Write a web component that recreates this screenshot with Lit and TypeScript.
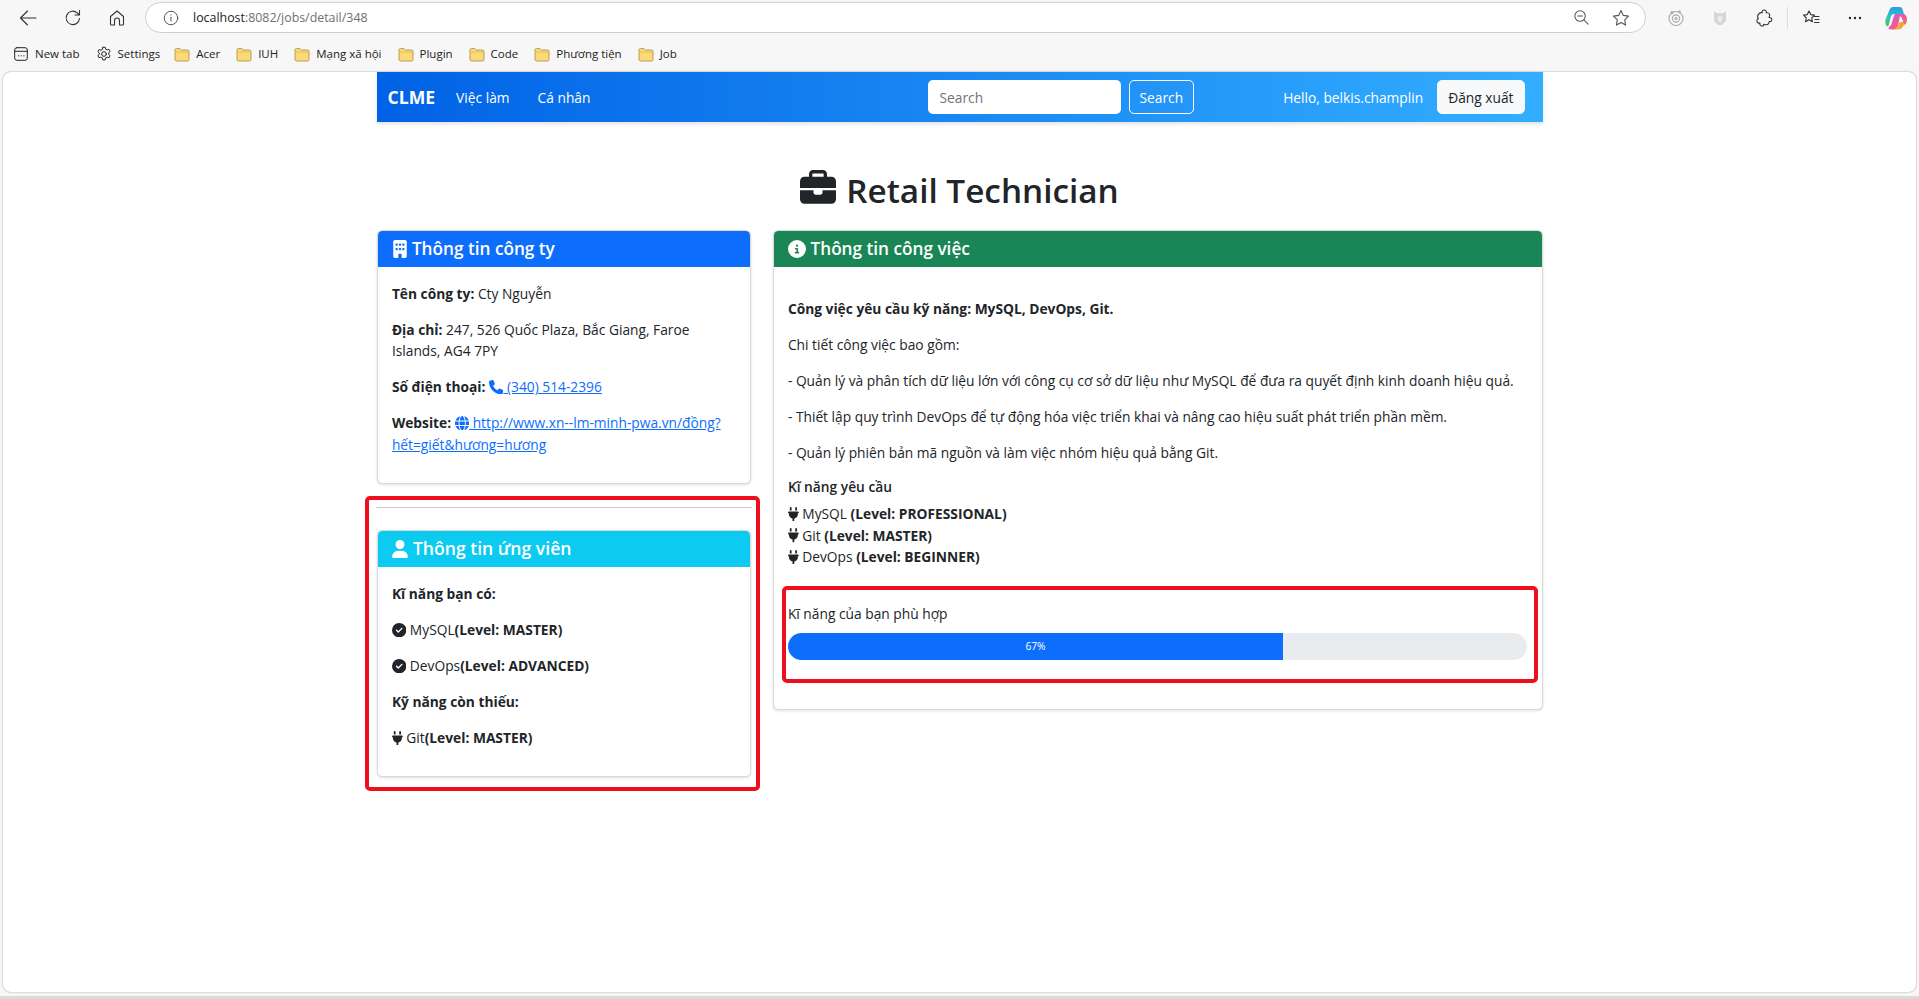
import { LitElement, html, css, svg } from "lit";
import { customElement } from "lit/decorators.js";

const fa = (vb: string, d: string, cls = "") =>
  html`<svg class="fa ${cls}" viewBox="${vb}" fill="currentColor"><path d="${d}"></path></svg>`;

const I = {
  check: () => fa("0 0 512 512", "M256 512A256 256 0 1 0 256 0a256 256 0 1 0 0 512zM369 209L241 337c-9.4 9.4-24.6 9.4-33.9 0l-64-64c-9.4-9.4-9.4-24.6 0-33.9s24.6-9.4 33.9 0l47 47L335 175c9.4-9.4 24.6-9.4 33.9 0s9.4 24.6 0 33.9z"),
  info: () => fa("0 0 512 512", "M256 512A256 256 0 1 0 256 0a256 256 0 1 0 0 512zM216 336h24V272H216c-13.3 0-24-10.7-24-24s10.7-24 24-24h48c13.3 0 24 10.7 24 24v88h8c13.3 0 24 10.7 24 24s-10.7 24-24 24H216c-13.3 0-24-10.7-24-24s10.7-24 24-24zm40-208a32 32 0 1 1 0 64 32 32 0 1 1 0-64z"),
  user: () => fa("0 0 448 512", "M224 256A128 128 0 1 0 224 0a128 128 0 1 0 0 256zm-45.7 48C79.8 304 0 383.8 0 482.3C0 498.7 13.3 512 29.7 512H418.3c16.4 0 29.7-13.3 29.7-29.7C448 383.8 368.2 304 269.7 304H178.3z"),
  phone: () => fa("0 0 512 512", "M164.9 24.6c-7.7-18.6-28-28.5-47.4-23.2l-88 24C12.1 30.2 0 46 0 64C0 311.4 200.6 512 448 512c18 0 33.8-12.1 38.6-29.5l24-88c5.3-19.4-4.6-39.7-23.2-47.4l-96-40c-16.3-6.8-35.2-2.1-46.3 11.6L304.7 368C234.3 334.7 177.3 277.7 144 207.3L193.3 167c13.7-11.2 18.4-30 11.6-46.3l-40-96z"),
  building: () => fa("0 0 384 512", "M48 0C21.5 0 0 21.5 0 48V464c0 26.5 21.5 48 48 48h96V432c0-26.5 21.5-48 48-48s48 21.5 48 48v80h96c26.5 0 48-21.5 48-48V48c0-26.5-21.5-48-48-48H48zM64 240c0-8.8 7.2-16 16-16h32c8.8 0 16 7.2 16 16v32c0 8.8-7.2 16-16 16H80c-8.8 0-16-7.2-16-16V240zm112-16h32c8.8 0 16 7.2 16 16v32c0 8.8-7.2 16-16 16H176c-8.8 0-16-7.2-16-16V240c0-8.8 7.2-16 16-16zm80 16c0-8.8 7.2-16 16-16h32c8.8 0 16 7.2 16 16v32c0 8.8-7.2 16-16 16H272c-8.8 0-16-7.2-16-16V240zM80 96h32c8.8 0 16 7.2 16 16v32c0 8.8-7.2 16-16 16H80c-8.8 0-16-7.2-16-16V112c0-8.8 7.2-16 16-16zm80 16c0-8.8 7.2-16 16-16h32c8.8 0 16 7.2 16 16v32c0 8.8-7.2 16-16 16H176c-8.8 0-16-7.2-16-16V112zM272 96h32c8.8 0 16 7.2 16 16v32c0 8.8-7.2 16-16 16H272c-8.8 0-16-7.2-16-16V112c0-8.8 7.2-16 16-16z"),
  plug: () => fa("0 0 384 512", "M96 0C78.3 0 64 14.3 64 32v96h64V32c0-17.7-14.3-32-32-32zM288 0c-17.7 0-32 14.3-32 32v96h64V32c0-17.7-14.3-32-32-32zM32 160c-17.7 0-32 14.3-32 32s14.3 32 32 32v32c0 77.4 55 142 128 156.8V480c0 17.7 14.3 32 32 32s32-14.3 32-32V412.8C297 398 352 333.4 352 256V224c17.7 0 32-14.3 32-32s-14.3-32-32-32H32z", "plug"),
  briefcase: () => fa("0 0 512 512", "M184 48H328c4.4 0 8 3.6 8 8V96H176V56c0-4.4 3.6-8 8-8zm-56 8V96H64C28.7 96 0 124.7 0 160v96H192 320 512V160c0-35.3-28.7-64-64-64H384V56c0-30.9-25.1-56-56-56H184c-30.9 0-56 25.1-56 56zM512 288H320v32c0 17.7-14.3 32-32 32H224c-17.7 0-32-14.3-32-32V288H0V416c0 35.3 28.7 64 64 64H448c35.3 0 64-28.7 64-64V288z"),
  globe: () => fa("0 0 512 512", "M352 256c0 22.2-1.2 43.6-3.3 64H163.3c-2.2-20.4-3.3-41.8-3.3-64s1.2-43.6 3.3-64H348.7c2.2 20.4 3.3 41.8 3.3 64zm28.8-64H503.9c5.3 20.5 8.1 41.9 8.1 64s-2.8 43.5-8.1 64H380.8c2.1-20.6 3.2-42 3.2-64s-1.1-43.4-3.2-64zm112.6-32H376.7c-10-63.9-29.8-117.4-55.3-151.6c78.3 20.7 142 77.5 171.9 151.6zm-149.1 0H167.7c6.1-36.4 15.5-68.6 27-94.7c10.5-23.6 22.2-40.7 33.5-51.5C239.4 3.2 248.7 0 256 0s16.6 3.2 27.8 13.8c11.3 10.8 23 27.9 33.5 51.5c11.6 26 20.9 58.2 27 94.7zm-209 0H18.6C48.6 85.9 112.2 29.1 190.6 8.4C165.1 42.6 145.3 96.1 135.3 160zM8.1 192H131.2c-2.1 20.6-3.2 42-3.2 64s1.1 43.4 3.2 64H8.1C2.8 299.5 0 278.1 0 256s2.8-43.5 8.1-64zM194.7 446.6c-11.6-26-20.9-58.2-27-94.6H344.3c-6.1 36.4-15.5 68.6-27 94.6c-10.5 23.6-22.2 40.7-33.5 51.5C272.6 508.8 263.3 512 256 512s-16.6-3.2-27.8-13.8c-11.3-10.8-23-27.9-33.5-51.5zM135.3 352c10 63.9 29.8 117.4 55.3 151.6C112.2 482.9 48.6 426.1 18.6 352H135.3zm358.1 0c-30 74.1-93.6 130.9-171.9 151.6c25.5-34.2 45.2-87.7 55.3-151.6H493.4z"),
};

const line = (w: number, body: unknown, cls = "") =>
  html`<svg class="ln ${cls}" width="${w}" height="${w}" viewBox="0 0 20 20" fill="none" stroke="currentColor" stroke-width="1.1" stroke-linecap="round" stroke-linejoin="round">${body}</svg>`;

const chrome = {
  back: svg`<path d="M18 10H2.500M9.500 3l-7 7 7 7"/>`,
  reload: svg`<path d="M16.500 10.500a6.700 6.700 0 1 1-2.300-5.700L16.500 7M16.500 2.500V7H12"/>`,
  home: svg`<path d="M3.500 8.500 10 3l6.500 5.500V16a1 1 0 0 1-1 1H12.500v-4.500a2.500 2.500 0 0 0-5 0V17H4.500a1 1 0 0 1-1-1z"/>`,
  info: svg`<circle cx="10" cy="10" r="7.500"/><path d="M10 9v4.500M10 6.400v.4"/>`,
  zoom: svg`<circle cx="8.500" cy="8.500" r="5.500"/><path d="M6 8.500h5M12.600 12.600 17 17"/>`,
  star: svg`<path d="M10 2.500l2.300 4.900 5.200.7-3.800 3.700.9 5.300-4.600-2.600-4.600 2.600.9-5.300-3.800-3.700 5.200-.7z"/>`,
  puzzle: svg`<path d="M8.200 4.800C7.700 2.900 8.800 2 10.200 2s2.500 1 2 2.800c1.800-.3 3.500.4 3.500 2.200 0 1.100-.5 1.800-.6 2.500 1.500-.2 2.700.7 2.700 2.100 0 1.500-1.200 2.300-2.700 2 .2 1.900-1.100 3.100-3 3.100-1 0-1.700-.4-2.400-.5.100 1.500-.8 1.900-2 1.700-1.500-.2-2.100-1.500-1.800-2.800-1.500.2-3-.6-3-2.200 0-1.300.7-2 1.500-2.400-1.100-1.100-1.100-2.900 0-4C5.400 4.500 6.900 4.500 8.200 4.800z"/>`,
  fav: svg`<path d="M8 3l1.700 3.600 3.800.5-2.800 2.700.7 3.900L8 11.800l-3.400 1.900.7-3.900L2.500 7.100l3.800-.5zM13.500 8.500H18M14 11.500h4M13.500 14.500H18"/>`,
  tab: svg`<rect x="3" y="3" width="14" height="14" rx="2.500"/><path d="M3 7h14M7 12h.4M10 12h.4M13 12h.4"/>`,
  gear: svg`<circle cx="10" cy="10" r="2.600"/><path d="M8.600 2.500h2.800l.4 2.100 1.600.9 2-.7 1.400 2.400-1.600 1.400v1.800l1.600 1.400-1.400 2.400-2-.7-1.600.9-.4 2.100H8.600l-.4-2.100-1.600-.9-2 .7-1.400-2.400 1.600-1.400V8.900L3.200 7.500l1.400-2.400 2 .7 1.600-.9z"/>`,
  eye: svg`<circle cx="10" cy="10.500" r="7"/><circle cx="10" cy="10.500" r="3.600"/><circle cx="10" cy="10.500" r="1"/><circle cx="6" cy="4.500" r="1" fill="currentColor"/><circle cx="13.500" cy="3.800" r=".8" fill="currentColor"/>`,
  shield: svg`<path d="M4 3l3 2.200h6L16 3v8.500c0 2.800-2.800 4.800-6 6-3.200-1.200-6-3.200-6-6z" fill="currentColor" fill-opacity=".45" stroke="none"/><path d="M7.500 8h5v4.500L10 14.500 7.500 12.500z" fill="#e9e9e9" stroke="none"/>`,
};

const folder = html`<svg class="folder" width="16" height="15" viewBox="0 0 16 15"><path d="M1 3a1.500 1.500 0 0 1 1.500-1.500h3.200L7.400 3h6.100A1.500 1.500 0 0 1 15 4.500v8a1.500 1.500 0 0 1-1.500 1.500h-11A1.500 1.500 0 0 1 1 12.500z" fill="#fbd978" stroke="#a98b3c" stroke-width=".8"></path><path d="M1.200 5h13.600" stroke="#e0b94f" stroke-width=".8"></path></svg>`;

const bookmarks = ["Acer", "IUH", "Mạng xã hội", "Plugin", "Code", "Phương tiện", "Job"];

@customElement("app-root")
export class AppRoot extends LitElement {
  static styles = css`
    :host {
      display: block;
      position: relative;
      height: 999px;
      overflow: hidden;
      background: #f7f7f7;
      font-family: "Open Sans", "Noto Sans", sans-serif;
      color: #212529;
      font-size: 13.78px;
      line-height: 21.6px;
    }
    .toolbar {
      height: 36px;
      display: flex;
      align-items: center;
      padding-left: 18px;
      color: #333;
    }
    .toolbar > * { flex: none; }
    .nav-ic { display: flex; gap: 24.5px; margin-right: 18px; }
    .address {
      width: 1501px;
      height: 31px;
      box-sizing: border-box;
      margin-top: -1px;
      background: #fff;
      border: 1px solid #cfcfcf;
      border-radius: 16px;
      display: flex;
      align-items: center;
      padding: 0 14px 0 16px;
      font-size: 12.4px;
    }
    .address .url { margin-left: 13px; flex: 1; color: #6f6f6f; }
    .address .url b { font-weight: 400; color: #1c1c1c; }
    .address .ln { color: #555; }
    .address .zoom { margin-right: 20px; }
    .tools { display: flex; align-items: center; margin-left: 20px; gap: 24px; }
    .tools .faint { color: #aaa; }
    .sep { width: 1px; height: 22px; background: #ddd; margin: 0 -11px; }
    .copilot { margin-left: -4px; }
    .bmbar {
      height: 36px;
      display: flex;
      align-items: center;
      padding-left: 12px;
      font-size: 11.5px;
      color: #222;
    }
    .bm { display: flex; align-items: center; gap: 6px; margin-right: 16px; white-space: nowrap; }
    .bm.tab { gap: 5px; margin-right: 15px; }
    .bm.set { gap: 5px; margin-right: 14px; }
    .page {
      margin: 0 3px;
      height: 920px;
      background: #fff;
      border-radius: 8px;
      box-shadow: 0 0 2px rgba(0, 0, 0, 0.4);
    }
    .status { height: 3px; margin-top: 4px; background: #dadada; }
    .container { width: 1166px; margin: 0 auto; position: relative; }
    nav {
      height: 50px;
      display: flex;
      align-items: center;
      padding: 0 18px 0 11px;
      background: linear-gradient(90deg, #0062e6, #33aeff);
      color: #fff;
      box-shadow: 0 2px 4px rgba(0, 0, 0, 0.12);
    }
    nav > span { padding-top: 1px; }
    .brand { font-size: 17.6px; font-weight: 700; margin-right: 21px; }
    .link { margin-right: 28px; }
    .spacer { flex: 1; }
    nav > .search {
      width: 193px;
      height: 34px;
      box-sizing: border-box;
      background: #fff;
      border-radius: 5px;
      color: #6c757d;
      padding: 7px 12px 5px;
      margin-right: 8px;
    }
    nav > .btn {
      height: 34px;
      box-sizing: border-box;
      border-radius: 5px;
      border: 1px solid #fff;
      padding: 6px 10px 4px;
      display: block;
    }
    .hello { margin: 0 14px 0 89px; }
    nav > .logout { background: #f8f9fa; border-color: #f8f9fa; color: #212529; padding: 6px 10px 4px; }
    h1 {
      margin: 0;
      height: 108px;
      padding-top: 46px;
      padding-bottom: 18px;
      box-sizing: border-box;
      font-size: 33.3px;
      line-height: 43px;
      font-weight: 600;
      display: flex;
      justify-content: center;
      align-items: center;
      gap: 10px;
    }
    h1 .fa { width: 36px; height: 36px; margin-top: -4px; }
    .cols { display: grid; grid-template-columns: 374px 770px; column-gap: 22px; align-items: start; }
    .card {
      background: #fff;
      border: 1px solid rgba(0, 0, 0, 0.15);
      border-radius: 5.4px;
      box-shadow: 0 1px 3px rgba(0, 0, 0, 0.12);
      overflow: hidden;
    }
    .head {
      height: 37px;
      display: flex;
      align-items: center;
      padding: 0 14.4px;
      margin: -1px -1px 0;
      color: #fff;
      font-size: 17.2px;
      font-weight: 600;
      gap: 4px;
    }
    .head .fa { width: 18px; height: 18px; }
    .blue { background: #0d6efd; }
    .blue.head { gap: 3px; }
    .green { background: #1b8655; }
    .green.head { gap: 5px; padding-left: 15px; }
    .cyan { background: #0dcaf0; font-size: 17.6px; }
    .body { padding: 15.8px 14.4px 8px; }
    .card-2 .body { padding-top: 16.4px; }
    p { margin: 0 0 14.4px; }
    strong { font-weight: 700; }
    a { color: #0d6efd; text-decoration: underline; }
    .fa { width: 14.4px; height: 14.4px; vertical-align: -2px; }
    .fa.plug { width: 10.8px; }
    .card-1 { height: 254px; box-sizing: border-box; }
    hr { margin: 23px -1px 22px; border: 0; border-top: 1px solid #ccc; height: 0; }
    .card-2 { height: 247px; box-sizing: border-box; }
    .card-3 { height: 480px; box-sizing: border-box; }
    .body3 { padding: 31.2px 14.4px 0; }
    .h6 { font-weight: 600; margin: -2.4px 0 6px; }
    .req { margin-bottom: 35.4px; }
    .req div { height: 21.4px; }
    .match { margin-bottom: 8.6px; }
    .progress {
      height: 27px;
      width: 739px;
      border-radius: 13.5px;
      background: #e9ecef;
      overflow: hidden;
      display: flex;
    }
    .fill {
      background: #0d6efd;
      color: #fff;
      font-size: 10.2px;
      line-height: 27px;
      text-align: center;
    }
    .mark {
      position: absolute;
      box-sizing: border-box;
      border: 4px solid #ee0f1d;
      border-radius: 5px;
      pointer-events: none;
    }
    .mark-left { left: -12px; top: 424px; width: 395px; height: 295px; }
    .mark-right { left: 405px; top: 514px; width: 756px; height: 97px; }
  `;

  render() {
    return html`
      <div class="toolbar">
        <div class="nav-ic">
          ${line(20, chrome.back)}${line(20, chrome.reload)}${line(20, chrome.home)}
        </div>
        <div class="address">
          ${line(18, chrome.info)}
          <span class="url"><b>localhost</b>:8082/jobs/detail/348</span>
          ${line(19, chrome.zoom, "zoom")}${line(20, chrome.star)}
        </div>
        <div class="tools">
          ${line(20, chrome.eye, "faint")}${line(20, chrome.shield, "faint")}${line(20, chrome.puzzle)}
          <span class="sep"></span>
          ${line(20, chrome.fav)}
          <svg width="20" height="20" viewBox="0 0 20 20" fill="#222"><circle cx="5" cy="10" r="1.200"></circle><circle cx="10" cy="10" r="1.200"></circle><circle cx="15" cy="10" r="1.200"></circle></svg>
          <svg class="copilot" width="22" height="24" viewBox="0 0 22 24">
            <defs>
              <linearGradient id="cg1" x1="0" y1="0" x2="0" y2="1"><stop offset="0" stop-color="#2b9be8"></stop><stop offset=".55" stop-color="#2fc6c0"></stop><stop offset="1" stop-color="#5fc24a"></stop></linearGradient>
              <linearGradient id="cg2" x1="0" y1="0" x2="1" y2="1"><stop offset="0" stop-color="#b868e6"></stop><stop offset=".6" stop-color="#ee5a9a"></stop><stop offset="1" stop-color="#f47a3a"></stop></linearGradient>
              <linearGradient id="cg3" x1="0" y1="0" x2="1" y2="0"><stop offset="0" stop-color="#e9d04a"></stop><stop offset="1" stop-color="#f4923a"></stop></linearGradient>
            </defs>
            <path d="M8 1h6.500c1.500 0 2.600.9 3 2.200L19 8H9.500c-2 0-3.200 1-3.700 2.800L4 18.500c-.4 1.500-1.500 2.500-2.500 1.500C.5 18.500 0 16 .5 13.500L4.500 4C5.200 2 6.300 1 8 1z" fill="url(#cg1)"></path>
            <path d="M10 8h8.500c1.500 0 2.800 1.500 3.300 3.500.5 2.500 0 4.500-1 6.500-.5 1-1.500 1-2 0l-1.500-5c-.5-2-1.800-3-3.800-3H9z" fill="url(#cg2)"></path>
            <path d="M10.500 9.500h3c1 0 1.500.5 1.300 1.500L13 20c-.5 2.200-1.800 3.500-4 3.500H5.500C3.500 23.500 3 22 4 21c1.500-1 2.200-2 2.700-3.500L8.500 11c.3-1 1-1.500 2-1.500z" fill="url(#cg2)"></path>
            <path d="M15 16h3.500c.8 1.500.3 4-1.500 5.800-1 1-2.200 1.700-3.700 1.700H8c2.500-.5 4-1.800 4.800-3.800z" fill="url(#cg3)"></path>
          </svg>
        </div>
      </div>
      <div class="bmbar">
        <span class="bm tab">${line(18, chrome.tab)}New tab</span>
        <span class="bm set">${line(18, chrome.gear)}Settings</span>
        ${bookmarks.map((b) => html`<span class="bm">${folder}${b}</span>`)}
      </div>
      <div class="page">
        <div class="container">
          <nav>
            <span class="brand">CLME</span>
            <span class="link">Việc làm</span>
            <span class="link">Cá nhân</span>
            <span class="spacer"></span>
            <span class="search">Search</span>
            <span class="btn">Search</span>
            <span class="hello">Hello, belkis.champlin</span>
            <span class="btn logout">Đăng xuất</span>
          </nav>
          <h1>${I.briefcase()}Retail Technician</h1>
          <div class="cols">
            <div>
              <section class="card card-1">
                <div class="head blue">${I.building()}Thông tin công ty</div>
                <div class="body">
                  <p><strong>Tên công ty:</strong> Cty Nguyễn</p>
                  <p><strong>Địa chỉ:</strong> 247, 526 Quốc Plaza, Bắc Giang, Faroe Islands, AG4 7PY</p>
                  <p><strong>Số điện thoại:</strong> <a href="#">${I.phone()} (340) 514-2396</a></p>
                  <p><strong>Website:</strong> <a href="#">${I.globe()} http://www.xn--lm-minh-pwa.vn/đồng?hết=giết&hương=hương</a></p>
                </div>
              </section>
              <hr />
              <section class="card card-2">
                <div class="head cyan">${I.user()}Thông tin ứng viên</div>
                <div class="body">
                  <p><strong>Kĩ năng bạn có:</strong></p>
                  <p>${I.check()} MySQL<strong>(Level: MASTER)</strong></p>
                  <p>${I.check()} DevOps<strong>(Level: ADVANCED)</strong></p>
                  <p><strong>Kỹ năng còn thiếu:</strong></p>
                  <p>${I.plug()} Git<strong>(Level: MASTER)</strong></p>
                </div>
              </section>
            </div>
            <section class="card card-3">
              <div class="head green">${I.info()}Thông tin công việc</div>
              <div class="body3">
                <p><strong>Công việc yêu cầu kỹ năng: MySQL, DevOps, Git.</strong></p>
                <p>Chi tiết công việc bao gồm:</p>
                <p>- Quản lý và phân tích dữ liệu lớn với công cụ cơ sở dữ liệu như MySQL để đưa ra quyết định kinh doanh hiệu quả.</p>
                <p>- Thiết lập quy trình DevOps để tự động hóa việc triển khai và nâng cao hiệu suất phát triển phần mềm.</p>
                <p>- Quản lý phiên bản mã nguồn và làm việc nhóm hiệu quả bằng Git.</p>
                <div class="h6">Kĩ năng yêu cầu</div>
                <div class="req">
                  <div>${I.plug()} MySQL <strong>(Level: PROFESSIONAL)</strong></div>
                  <div>${I.plug()} Git <strong>(Level: MASTER)</strong></div>
                  <div>${I.plug()} DevOps <strong>(Level: BEGINNER)</strong></div>
                </div>
                <div class="match">Kĩ năng của bạn phù hợp</div>
                <div class="progress"><div class="fill" style="width:67%">67%</div></div>
              </div>
            </section>
          </div>
          <div class="mark mark-left"></div>
          <div class="mark mark-right"></div>
        </div>
      </div>
      <div class="status"></div>
    `;
  }
}
